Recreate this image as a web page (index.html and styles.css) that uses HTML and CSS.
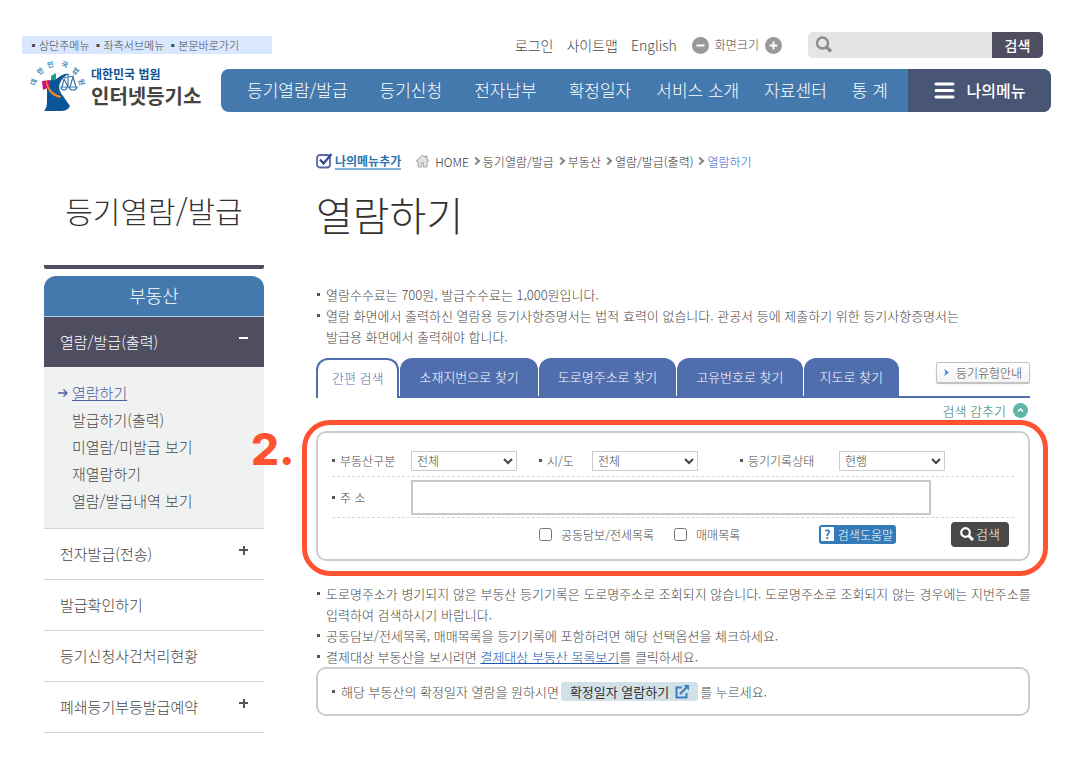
FILE: index.html
```html
<!DOCTYPE html>
<html lang="ko">

<head>
    <meta charset="utf-8">
    <title>인터넷등기소</title>
    <link rel="stylesheet" href="styles.css">
</head>

<body>
    <header>
        <div class="top">
            <div class="skip">
                <a href="#gnb">▪상단주메뉴</a>
                <a href="#side">▪좌측서브메뉴</a>
                <a href="#content">▪본문바로가기</a>
            </div>
            <div class="util">
                <a href="#">로그인</a>
                <a href="#">사이트맵</a>
                <a href="#">English</a>
                <div class="zoom">
                    <button type="button" aria-label="축소">
                        <svg width="17" height="17" viewBox="0 0 17 17"><circle cx="8.5" cy="8.5" r="8.5" fill="#999"/><path d="M4.5 8.5h8" stroke="#fff" stroke-width="2"/></svg>
                    </button>
                    <span>화면크기</span>
                    <button type="button" aria-label="확대">
                        <svg width="17" height="17" viewBox="0 0 17 17"><circle cx="8.5" cy="8.5" r="8.5" fill="#999"/><path d="M4.5 8.5h8M8.5 4.5v8" stroke="#fff" stroke-width="2"/></svg>
                    </button>
                </div>
            </div>
            <form class="site-search">
                <svg width="18" height="18" viewBox="0 0 18 18" fill="none" stroke="#8c8c8c"><circle cx="7.5" cy="7" r="5.5" stroke-width="2.4"/><path d="M11.5 11l4.5 4.5" stroke-width="3.2"/></svg>
                <input type="text" aria-label="검색어">
                <button type="button">검색</button>
            </form>
        </div>
        <div class="bar">
            <a class="logo" href="#">
                <svg width="56" height="53" viewBox="0 0 56 53">
                    <g font-size="7" font-weight="bold" fill="#3d87b5" text-anchor="middle">
                        <text transform="translate(6 24) rotate(-70)">대</text>
                        <text transform="translate(12 14) rotate(-42)">한</text>
                        <text transform="translate(21 8) rotate(-12)">민</text>
                        <text transform="translate(34 8) rotate(14)">국</text>
                        <text transform="translate(44 14) rotate(42)">법</text>
                        <text transform="translate(49 24) rotate(70)">원</text>
                    </g>
                    <path d="M21 17l5-3v6l-5 3z" fill="#18a28b"/>
                    <path d="M21 21c3 1 5-1 8-3s6-4 11-3c-5 1-8 5-10 9-2 5 0 9 3 13l7 10c-2 4-5 5-10 5H14c3-3 3-7 3-12V24z" fill="#0c5597"/>
                    <path d="M12 22l8-1v7l-7 3z" fill="#d5087e"/>
                    <path d="M17 22c1 7 6 13 14 15l-1 2c-9-2-14-9-14-17z" fill="#f08a2c"/>
                    <g fill="none" stroke="#3d78a8" stroke-width="1.2"><path d="M34 19l10-2M38 15v14M34 20l-2 8M34 20l4 8M43 18l-3 10M43 18l3 10"/><path d="M31 28c0 4 6 4 6 0zM39 28c1 4 7 4 8 0z"/></g>
                </svg>
                <span class="logo-text"><small>대한민국 법원</small><strong>인터넷등기소</strong></span>
            </a>
            <nav id="gnb">
                <ul>
                    <li class="wide"><a href="#">등기열람/발급</a></li>
                    <li class="wide"><a href="#">등기신청</a></li>
                    <li class="wide"><a href="#">전자납부</a></li>
                    <li><a href="#">확정일자</a></li>
                    <li><a href="#">서비스 소개</a></li>
                    <li><a href="#">자료센터</a></li>
                    <li><a href="#">통 계</a></li>
                </ul>
                <button type="button" class="my-menu">
                    <svg width="21" height="17" viewBox="0 0 21 17" stroke="#fff" stroke-width="3" stroke-linecap="round"><path d="M2 2h17M2 8.5h17M2 15h17"/></svg>
                    나의메뉴
                </button>
            </nav>
        </div>
    </header>

    <div class="container">
        <aside id="side">
            <h2>등기열람/발급</h2>
            <p class="side-title">부동산</p>
            <ul class="side-menu">
                <li class="open">
                    <a href="#">열람/발급(출력) <b class="minus"></b></a>
                    <ul>
                        <li class="current">
                            <svg width="10" height="10" viewBox="0 0 10 10" fill="none" stroke="#4d5e9d" stroke-width="1.3"><path d="M0 5h9M5.500 1.500L9 5 5.500 8.500"/></svg>
                            <a href="#">열람하기</a>
                        </li>
                        <li><a href="#">발급하기(출력)</a></li>
                        <li><a href="#">미열람/미발급 보기</a></li>
                        <li><a href="#">재열람하기</a></li>
                        <li><a href="#">열람/발급내역 보기</a></li>
                    </ul>
                </li>
                <li><a href="#">전자발급(전송) <b class="plus"></b></a></li>
                <li><a href="#">발급확인하기</a></li>
                <li><a href="#">등기신청사건처리현황</a></li>
                <li><a href="#">폐쇄등기부등발급예약 <b class="plus"></b></a></li>
            </ul>
        </aside>

        <main id="content">
            <div class="path">
                <svg width="17" height="16" viewBox="0 0 17 16" fill="none"><rect x="1" y="2" width="13" height="12.500" rx="3" stroke="#5865a8" stroke-width="1.800"/><path d="M4 6.500l3.500 4L15.500 1" stroke="#34478f" stroke-width="2.200"/></svg>
                <a class="add" href="#">나의메뉴추가</a>
                <svg width="15" height="14" viewBox="0 0 15 14" fill="#e2e2e2" stroke="#a5a5a5"><path d="M7.500 1L1 7h2v6h3.500V9h2v4H12V7h2L12 5V2h-1.500v1.500z"/></svg>
                <a class="home" href="#">HOME</a>
                <i></i><a href="#">등기열람/발급</a>
                <i></i><a href="#">부동산</a>
                <i></i><a href="#">열람/발급(출력)</a>
                <i></i><a class="here" href="#">열람하기</a>
            </div>
            <h1>열람하기</h1>
            <ul class="notes intro">
                <li>열람수수료는 700원, 발급수수료는 1,000원입니다.</li>
                <li>열람 화면에서 출력하신 열람용 등기사항증명서는 법적 효력이 없습니다. 관공서 등에 제출하기 위한 등기사항증명서는<br>발급용 화면에서 출력해야 합니다.</li>
            </ul>

            <div class="tabs">
                <a class="on" href="#">간편 검색</a>
                <a href="#">소재지번으로 찾기</a>
                <a href="#">도로명주소로 찾기</a>
                <a href="#">고유번호로 찾기</a>
                <a href="#">지도로 찾기</a>
                <button type="button" class="guide">
                    <svg width="5" height="7" viewBox="0 0 5 7" fill="#3a8ac8"><path d="M0 0l5 3.500L0 7l1.500-3.500z"/></svg>
                    등기유형안내
                </button>
            </div>
            <a class="fold" href="#">검색 감추기
                <svg width="15" height="15" viewBox="0 0 15 15"><circle cx="7.500" cy="7.500" r="7.500" fill="#5fb5a6"/><path d="M5 8.500L7.500 6 10 8.500" fill="none" stroke="#fff" stroke-width="1.600"/></svg>
            </a>

            <div class="search-area">
                <form class="search-box">
                    <div class="row selects">
                        <label for="kind">부동산구분</label>
                        <span class="select"><select id="kind"><option>전체</option></select><svg width="10" height="7" viewBox="0 0 10 7"><path d="M1 1l4 4 4-4"/></svg></span>
                        <label for="city">시/도</label>
                        <span class="select"><select id="city"><option>전체</option></select><svg width="10" height="7" viewBox="0 0 10 7"><path d="M1 1l4 4 4-4"/></svg></span>
                        <label for="state">등기기록상태</label>
                        <span class="select"><select id="state"><option>현행</option></select><svg width="10" height="7" viewBox="0 0 10 7"><path d="M1 1l4 4 4-4"/></svg></span>
                    </div>
                    <div class="row address">
                        <label for="addr">주 소</label>
                        <input type="text" id="addr">
                    </div>
                    <div class="actions">
                        <label class="check"><input type="checkbox">공동담보/전세목록</label>
                        <label class="check"><input type="checkbox">매매목록</label>
                        <button type="button" class="help"><b>?</b>검색도움말</button>
                        <button type="button" class="submit">
                            <svg width="14" height="14" viewBox="0 0 14 14" fill="none" stroke="#fff"><circle cx="5.500" cy="5.500" r="4.300" stroke-width="2.200"/><path d="M8.500 8.500l4.500 4.500" stroke-width="3"/></svg>검색
                        </button>
                    </div>
                </form>
                <div class="mark"></div>
                <span class="mark-no">2.</span>
            </div>

            <ul class="notes">
                <li>도로명주소가 병기되지 않은 부동산 등기기록은 도로명주소로 조회되지 않습니다. 도로명주소로 조회되지 않는 경우에는 지번주소를<br>입력하여 검색하시기 바랍니다.</li>
                <li>공동담보/전세목록, 매매목록을 등기기록에 포함하려면 해당 선택옵션을 체크하세요.</li>
                <li>결제대상 부동산을 보시려면 <a href="#">결제대상 부동산 목록보기</a>를 클릭하세요.</li>
            </ul>
            <div class="fixed-date">
                <span>해당 부동산의 확정일자 열람을 원하시면</span>
                <a href="#">확정일자 열람하기
                    <svg width="14" height="14" viewBox="0 0 14 14" fill="none" stroke="#3b7fc0" stroke-width="2"><path d="M7 2.500H1.500v10h10V8M5 9l7-7"/><path d="M8.500 0H14v5.500z" fill="#3b7fc0" stroke="none"/></svg>
                </a>
                <span>를 누르세요.</span>
            </div>
        </main>
    </div>
</body>

</html>
```

FILE: styles.css
```css
* {
    box-sizing: border-box;
}

body {
    margin: 0;
    background: #fff;
    color: #484848;
    font-family: "Noto Sans CJK KR", "Liberation Sans", sans-serif;
    font-size: 13px;
    font-weight: 300;
    line-height: 21px;
}

a {
    color: inherit;
    text-decoration: none;
}

ul {
    list-style: none;
    margin: 0;
    padding: 0;
}

p,
h1,
h2 {
    margin: 0;
    font-weight: 300;
}

button,
input,
select {
    font: inherit;
    color: inherit;
    margin: 0;
}

button {
    border: 0;
    padding: 0;
    background: none;
    cursor: pointer;
}

svg {
    flex: none;
}

/* header */
header {
    padding: 32px 16px 0 22px;
}

.top {
    display: flex;
    align-items: center;
    height: 26px;
    padding-right: 8px;
}

.skip {
    display: flex;
    gap: 3px;
    width: 250px;
    height: 18px;
    padding-left: 6px;
    background: #d9e7ff;
    font-size: 11px;
    line-height: 18px;
}

.util {
    display: flex;
    align-items: center;
    gap: 13px;
    margin-left: auto;
    font-size: 14px;
    line-height: 18px;
}

.zoom {
    display: flex;
    align-items: center;
    gap: 6px;
    margin-left: 2px;
    font-size: 12px;
}

.zoom svg {
    display: block;
}

.site-search {
    display: flex;
    align-items: center;
    width: 235px;
    height: 26px;
    margin-left: 26px;
    padding-left: 7px;
    border-radius: 5px;
    background: #e5e5e5;
    overflow: hidden;
}

.site-search input {
    flex: 1;
    min-width: 0;
    border: 0;
    background: none;
}

.site-search button {
    width: 51px;
    height: 26px;
    background: #4f4d60;
    color: #fff;
    font-size: 14px;
    font-weight: 500;
    line-height: 24px;
}

.bar {
    display: flex;
    align-items: flex-end;
    height: 54px;
}

.logo {
    display: flex;
    flex: none;
    width: 199px;
    padding-left: 8px;
    gap: 5px;
}

.logo svg {
    overflow: visible;
}

.logo-text {
    padding-top: 6px;
}

.logo small,
.logo strong {
    display: block;
    font-weight: bold;
}

.logo small {
    color: #14528f;
    font-size: 12px;
    line-height: 18px;
}

.logo strong {
    color: #444;
    font-size: 20px;
    line-height: 26px;
}

nav {
    display: flex;
    flex: 1;
    height: 43px;
    border-radius: 8px;
    background: #4479ad;
    color: #fff;
    overflow: hidden;
}

nav ul {
    display: flex;
    flex: 1;
    padding-left: 26px;
    font-size: 17px;
    line-height: 41px;
    white-space: nowrap;
}

nav li {
    margin-right: 25px;
}

nav .wide {
    margin-right: 32px;
}

nav li:last-child {
    margin-right: 0;
}

.my-menu {
    display: flex;
    flex: none;
    align-items: center;
    justify-content: center;
    gap: 12px;
    width: 143px;
    background: #485575;
    font-size: 16px;
    font-weight: 500;
}

/* columns */
.container {
    display: flex;
    gap: 52px;
    padding: 0 37px 24px 44px;
}

aside {
    flex: none;
    width: 220px;
    padding-top: 74px;
    font-size: 15px;
}

aside h2 {
    height: 83px;
    margin-bottom: 7px;
    border-bottom: 4px solid #4f4d60;
    border-radius: 2px;
    color: #333;
    font-size: 30px;
    line-height: 48px;
    text-align: center;
}

.side-title {
    height: 41px;
    border-bottom: 1px solid #b5cde2;
    border-radius: 12px 12px 0 0;
    background: #4479ad;
    color: #fff;
    font-size: 18px;
    line-height: 38px;
    text-align: center;
}

.side-menu > li {
    border-bottom: 1px solid #d3d3d3;
}

.side-menu > li > a {
    display: flex;
    justify-content: space-between;
    align-items: center;
    height: 50px;
    padding: 0 16px 2px;
}

.side-menu > .open > a {
    background: #4f4d60;
    color: #fff;
}

.plus,
.minus {
    width: 9px;
    height: 9px;
    margin-bottom: 6px;
    background: linear-gradient(#555, #555) center / 9px 2px no-repeat, linear-gradient(#555, #555) center / 2px 9px no-repeat;
}

.minus {
    background: linear-gradient(#fff, #fff) center / 9px 2px no-repeat;
}

.side-menu ul {
    padding: 12px 0 14px 28px;
    background: #f0f2f2;
    line-height: 27px;
}

.side-menu .current {
    display: flex;
    align-items: center;
    gap: 4px;
    margin-left: -14px;
    color: #4d5e9d;
}

.current a {
    text-decoration: underline;
}

main {
    flex: 1;
    min-width: 0;
    padding-top: 38px;
}

.path {
    display: flex;
    align-items: center;
    height: 22px;
    color: #333;
    font-size: 12px;
    white-space: nowrap;
}

.path i {
    width: 6px;
    height: 6px;
    margin: 0 4px 0 4px;
    border: solid #888;
    border-width: 2px 2px 0 0;
    transform: rotate(45deg);
}

.path .add {
    margin: 0 14px 0 2px;
    border-bottom: 2px solid #7fb0d8;
    color: #2d75ae;
    font-weight: bold;
    line-height: 15px;
}

.path .home {
    margin-left: 5px;
}

.path .here {
    color: #2f62d0;
}

h1 {
    height: 112px;
    padding-top: 14px;
    color: #333;
    font-size: 40px;
    line-height: 56px;
}

.notes li,
.fixed-date {
    position: relative;
}

.notes li {
    padding-left: 10px;
    white-space: nowrap;
}

.notes li::before,
.row label::before,
.fixed-date::before {
    content: "";
    width: 3px;
    height: 3px;
    background: #555;
}

.notes li::before {
    position: absolute;
    top: 9px;
    left: 1px;
}

.notes a {
    color: #1a56a8;
    text-decoration: underline;
}

.tabs {
    display: flex;
    gap: 1px;
    height: 40px;
    margin-top: 11px;
    border-bottom: 2px solid #506eae;
}

.tabs a {
    height: 38px;
    padding: 0 19px;
    border-radius: 12px 12px 0 0;
    background: #506eae;
    color: #fff;
    line-height: 38px;
    white-space: nowrap;
}

.tabs a:nth-of-type(5) {
    padding: 0 16px;
}

.tabs .on {
    height: 40px;
    padding: 0 14px;
    border: 2px solid #506eae;
    border-bottom: 0;
    background: #fff;
    color: #506eae;
    line-height: 36px;
}

.guide {
    display: flex;
    align-items: center;
    justify-content: center;
    gap: 7px;
    width: 94px;
    height: 21px;
    margin: 4px 0 0 auto;
    border: 1px solid #c4c4c4;
    border-radius: 2px;
    background: linear-gradient(#fff, #f3f3f3);
    box-shadow: 0 1px 1px #bbb;
    font-size: 12px;
    line-height: 18px;
}

.fold {
    display: flex;
    align-items: center;
    justify-content: flex-end;
    gap: 7px;
    height: 25px;
    margin-bottom: 8px;
    padding-right: 2px;
    color: #2d7a68;
}

/* search form */
.search-area {
    position: relative;
    margin-bottom: 22px;
}

.search-box {
    height: 130px;
    padding: 12px 14px 0;
    border: 2px solid #ccc;
    border-radius: 10px;
    font-size: 12px;
}

.row {
    display: grid;
    align-items: center;
    border-bottom: 1px dashed #d8d8d8;
}

.selects {
    grid-template-columns: 79px 128px 53px 148px 99px 1fr;
    height: 32px;
}

.address {
    grid-template-columns: 79px 1fr;
    height: 41px;
}

.row label {
    display: flex;
    align-items: center;
    gap: 5px;
}

.select {
    position: relative;
    width: 106px;
}

.select select {
    display: block;
    width: 100%;
    height: 20px;
    padding: 0 5px;
    border: 1px solid #ccc;
    border-radius: 0;
    background: #fff;
    appearance: none;
    line-height: 18px;
}

.select svg {
    position: absolute;
    top: 7px;
    right: 4px;
    fill: none;
    stroke: #444;
    stroke-width: 2;
    pointer-events: none;
}

.address input {
    height: 35px;
    margin-right: 83px;
    border: 2px solid #c8c8c8;
    background: #fff;
}

.actions {
    display: flex;
    align-items: center;
    height: 32px;
    padding: 0 5px 0 207px;
    white-space: nowrap;
}

.check {
    display: flex;
    align-items: center;
    gap: 9px;
    margin-right: 20px;
}

.check input {
    width: 13px;
    height: 13px;
}

.help {
    display: flex;
    align-items: center;
    gap: 4px;
    height: 19px;
    margin-left: auto;
    padding: 0 3px 0 2px;
    border-radius: 3px;
    background: #337ab7;
    color: #fff;
}

.help b {
    width: 13px;
    background: #fff;
    color: #337ab7;
    font-weight: bold;
    line-height: 14px;
    text-align: center;
}

.submit {
    display: flex;
    align-items: center;
    justify-content: center;
    gap: 2px;
    width: 58px;
    height: 25px;
    margin-left: 55px;
    border-radius: 4px;
    background: #484848;
    color: #fff;
    font-size: 13px;
    line-height: 20px;
}

/* step highlight over the form */
.mark {
    position: absolute;
    inset: -11px -18px -15px -14px;
    border: 5px solid #ff5230;
    border-radius: 28px;
    pointer-events: none;
}

.mark-no {
    position: absolute;
    top: -8px;
    left: -65px;
    color: #ff5230;
    font-family: Inter, sans-serif;
    font-size: 44px;
    font-weight: 800;
    line-height: 52px;
}

.fixed-date {
    display: flex;
    align-items: center;
    height: 49px;
    padding-left: 14px;
    border: 2px solid #ccc;
    border-radius: 10px;
    white-space: nowrap;
}

.fixed-date::before {
    margin-right: 6px;
}

.fixed-date a {
    display: flex;
    align-items: center;
    gap: 6px;
    height: 19px;
    margin: 0 2px;
    padding: 0 9px;
    border-radius: 3px;
    background: #d2e1e7;
    color: #333;
    font-weight: 400;
}
```
